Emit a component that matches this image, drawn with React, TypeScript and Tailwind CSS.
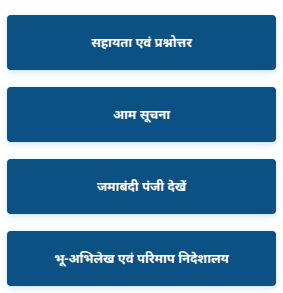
const LINKS = [
  'सहायता एवं प्रश्नोत्तर',
  'आम सूचना',
  'जमाबंदी पंजी देखें',
  'भू-अभिलेख एवं परिमाप निदेशालय',
];

export default function App() {
  return (
    <div className="min-h-screen bg-white px-[7px] pt-[15px] pb-2" style={{ fontFamily: '"Noto Sans", "Noto Sans Devanagari", sans-serif' }}>
      <div className="flex flex-col gap-[17px]">
        {LINKS.map(label => (
          <button
            key={label}
            className="h-[55px] w-full rounded-[4px] bg-[#0b5183] text-white text-[13px] font-bold shadow-[0_2px_7px_rgba(80,170,230,0.3)] flex items-center justify-center"
          >
            {label}
          </button>
        ))}
      </div>
    </div>
  );
}
